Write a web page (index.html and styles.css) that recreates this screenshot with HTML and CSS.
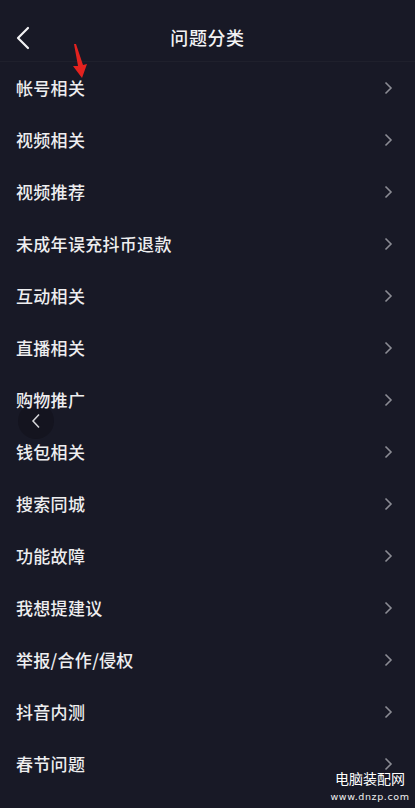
FILE: index.html
```html
<!DOCTYPE html>
<html lang="zh">
<head>
<meta charset="utf-8">
<link rel="stylesheet" href="styles.css">
</head>
<body>
<div class="page">
  <header class="header">
    <svg class="back" width="14" height="24" viewBox="0 0 14 24"><path d="M12 2 L2 12 L12 22" fill="none" stroke="#f2f2f4" stroke-width="2.2" stroke-linecap="round" stroke-linejoin="round"/></svg>
    <h1 class="title">问题分类</h1>
  </header>
  <ul class="list">
    <li class="row"><span>帐号相关</span><svg class="chev" width="9" height="14" viewBox="0 0 9 14"><path d="M1.5 1.5 L7 7 L1.5 12.5" fill="none" stroke="#8b8c94" stroke-width="1.6"/></svg></li>
    <li class="row"><span>视频相关</span><svg class="chev" width="9" height="14" viewBox="0 0 9 14"><path d="M1.5 1.5 L7 7 L1.5 12.5" fill="none" stroke="#8b8c94" stroke-width="1.6"/></svg></li>
    <li class="row"><span>视频推荐</span><svg class="chev" width="9" height="14" viewBox="0 0 9 14"><path d="M1.5 1.5 L7 7 L1.5 12.5" fill="none" stroke="#8b8c94" stroke-width="1.6"/></svg></li>
    <li class="row"><span>未成年误充抖币退款</span><svg class="chev" width="9" height="14" viewBox="0 0 9 14"><path d="M1.5 1.5 L7 7 L1.5 12.5" fill="none" stroke="#8b8c94" stroke-width="1.6"/></svg></li>
    <li class="row"><span>互动相关</span><svg class="chev" width="9" height="14" viewBox="0 0 9 14"><path d="M1.5 1.5 L7 7 L1.5 12.5" fill="none" stroke="#8b8c94" stroke-width="1.6"/></svg></li>
    <li class="row"><span>直播相关</span><svg class="chev" width="9" height="14" viewBox="0 0 9 14"><path d="M1.5 1.5 L7 7 L1.5 12.5" fill="none" stroke="#8b8c94" stroke-width="1.6"/></svg></li>
    <li class="row"><span>购物推广</span><svg class="chev" width="9" height="14" viewBox="0 0 9 14"><path d="M1.5 1.5 L7 7 L1.5 12.5" fill="none" stroke="#8b8c94" stroke-width="1.6"/></svg></li>
    <li class="row"><span>钱包相关</span><svg class="chev" width="9" height="14" viewBox="0 0 9 14"><path d="M1.5 1.5 L7 7 L1.5 12.5" fill="none" stroke="#8b8c94" stroke-width="1.6"/></svg></li>
    <li class="row"><span>搜索同城</span><svg class="chev" width="9" height="14" viewBox="0 0 9 14"><path d="M1.5 1.5 L7 7 L1.5 12.5" fill="none" stroke="#8b8c94" stroke-width="1.6"/></svg></li>
    <li class="row"><span>功能故障</span><svg class="chev" width="9" height="14" viewBox="0 0 9 14"><path d="M1.5 1.5 L7 7 L1.5 12.5" fill="none" stroke="#8b8c94" stroke-width="1.6"/></svg></li>
    <li class="row"><span>我想提建议</span><svg class="chev" width="9" height="14" viewBox="0 0 9 14"><path d="M1.5 1.5 L7 7 L1.5 12.5" fill="none" stroke="#8b8c94" stroke-width="1.6"/></svg></li>
    <li class="row"><span>举报/合作/侵权</span><svg class="chev" width="9" height="14" viewBox="0 0 9 14"><path d="M1.5 1.5 L7 7 L1.5 12.5" fill="none" stroke="#8b8c94" stroke-width="1.6"/></svg></li>
    <li class="row"><span>抖音内测</span><svg class="chev" width="9" height="14" viewBox="0 0 9 14"><path d="M1.5 1.5 L7 7 L1.5 12.5" fill="none" stroke="#8b8c94" stroke-width="1.6"/></svg></li>
    <li class="row"><span>春节问题</span><svg class="chev" width="9" height="14" viewBox="0 0 9 14"><path d="M1.5 1.5 L7 7 L1.5 12.5" fill="none" stroke="#8b8c94" stroke-width="1.6"/></svg></li>
  </ul>

  <svg class="red-arrow" width="20" height="38" viewBox="0 0 20 38">
    <path d="M2 0 L4 0 L11 21 L15 20 L10 34 L1 22 L6 22 Z" fill="#e3221f"/>
  </svg>

  <div class="float-back">
    <svg width="10" height="16" viewBox="0 0 10 16"><path d="M8 1.5 L2 8 L8 14.5" fill="none" stroke="#d6d6da" stroke-width="1.5"/></svg>
  </div>

  <div class="watermark">
    <div class="wm-name">电脑装配网</div>
    <div class="wm-url">www.dnzp.com</div>
  </div>
</div>
</body>
</html>
```

FILE: styles.css
```css
* { box-sizing: border-box; }
html, body {
  margin: 0;
  padding: 0;
  background: #181926;
}
body {
  font-family: "Noto Sans CJK SC", "Noto Sans", sans-serif;
  color: #ececef;
}
.page {
  position: relative;
  width: 415px;
  height: 808px;
  overflow: hidden;
  background: #181926;
}
.header {
  position: relative;
  height: 62px;
  display: flex;
  align-items: flex-start;
  justify-content: center;
  padding-top: 24px;
  border-bottom: 1px solid #1f202c;
}
.back {
  position: absolute;
  left: 16px;
  top: 26px;
}
.title {
  margin: 0;
  font-size: 18px;
  font-weight: 500;
  color: #f2f2f4;
  letter-spacing: 0.6px;
  line-height: 26px;
}
.list {
  position: relative;
  z-index: 1;
  list-style: none;
  margin: 0;
  padding: 0;
}
.row {
  height: 52px;
  display: flex;
  align-items: center;
  justify-content: space-between;
  padding: 0 22px 0 16px;
  font-size: 17px;
  font-weight: 500;
  letter-spacing: 0.3px;
  color: #eeeef0;
}
.row span {
  line-height: 24px;
}
.chev {
  flex: none;
}
.red-arrow {
  position: absolute;
  z-index: 2;
  left: 72px;
  top: 44px;
}
.float-back {
  position: absolute;
  z-index: 0;
  left: 18px;
  top: 403px;
  width: 36px;
  height: 36px;
  border-radius: 50%;
  background: #14141f;
  display: flex;
  align-items: center;
  justify-content: center;
}
.watermark {
  position: absolute;
  z-index: 2;
  left: 334px;
  top: 769px;
  width: 72px;
  display: flex;
  flex-direction: column;
  align-items: center;
}
.wm-name {
  font-size: 14px;
  line-height: 18px;
  color: #ffffff;
}
.wm-url {
  font-family: "DejaVu Sans", sans-serif;
  font-size: 9.5px;
  line-height: 14px;
  color: #f0f0f0;
  letter-spacing: 0.6px;
  margin-top: 3px;
}
```
